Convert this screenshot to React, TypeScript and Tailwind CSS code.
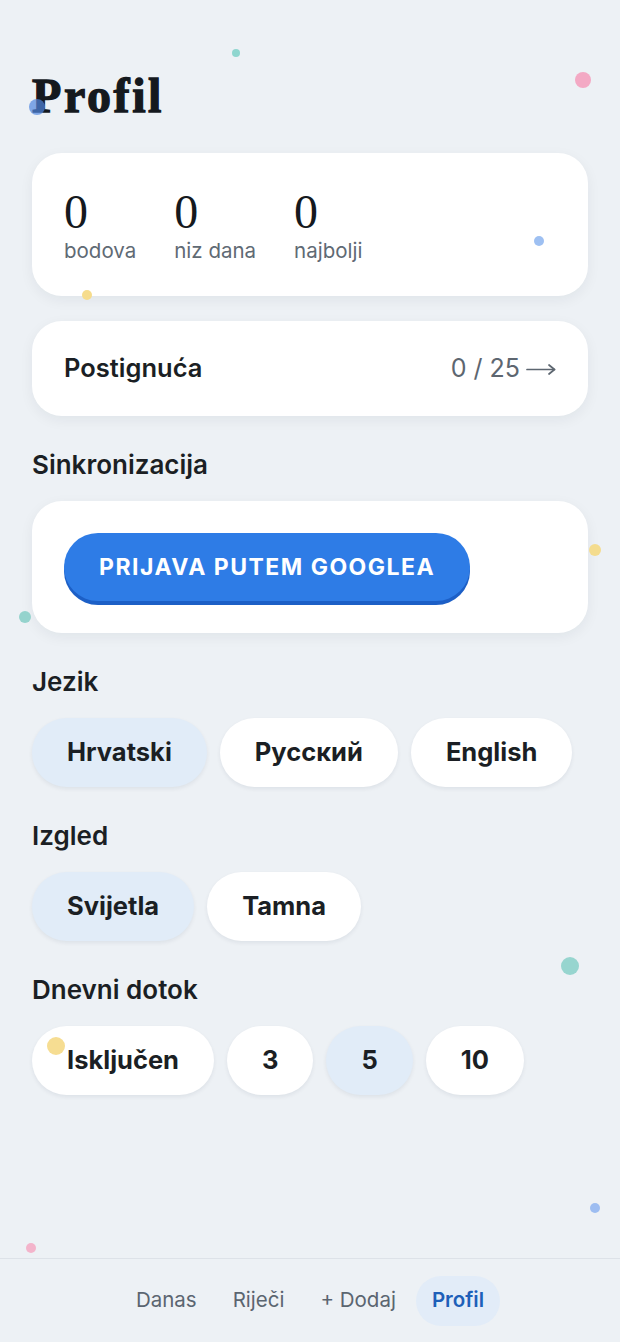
import React from 'react';

const dots = [
  { x: 236, y: 53, r: 4, c: 'bg-[#8fd6cf]' },
  { x: 583, y: 80, r: 8, c: 'bg-[#f3a9c4]' },
  { x: 37, y: 107, r: 8, c: 'bg-[#4f86e0]/70' },
  { x: 539, y: 241, r: 5, c: 'bg-[#9ec0f2]' },
  { x: 87, y: 295, r: 5, c: 'bg-[#f6dc8c]' },
  { x: 595, y: 550, r: 6, c: 'bg-[#f4dc8e]' },
  { x: 25, y: 617, r: 6, c: 'bg-[#95d3cd]' },
  { x: 570, y: 966, r: 9, c: 'bg-[#97d5cf]' },
  { x: 56, y: 1046, r: 9, c: 'bg-[#f6dd92]' },
  { x: 595, y: 1208, r: 5, c: 'bg-[#9dbdf1]' },
  { x: 31, y: 1248, r: 5, c: 'bg-[#f3b4cb]' },
];

function Chip({ label, active }: { label: string; active?: boolean }) {
  return (
    <button
      className={
        'h-[69px] px-[35px] rounded-full text-[25.5px] font-bold text-[#1b1f24] shadow-[0_2px_4px_rgba(20,30,50,0.07)] ' +
        (active ? 'bg-[#e1ecf8]' : 'bg-white')
      }
    >
      {label}
    </button>
  );
}

function Section({ title, children }: { title: string; children: React.ReactNode }) {
  return (
    <section className="mt-[34px]">
      <h2 className="h-[30px] leading-[30px] text-[26px] font-semibold text-[#1b1f24]">{title}</h2>
      <div className="mt-[21px]">{children}</div>
    </section>
  );
}

export default function App() {
  const stats = [
    { value: '0', label: 'bodova' },
    { value: '0', label: 'niz dana' },
    { value: '0', label: 'najbolji' },
  ];

  return (
    <div className="relative min-h-screen flex flex-col bg-[#edf1f5] font-['Inter','Noto_Sans',sans-serif] overflow-hidden">
      <main className="flex-1 px-8 pt-[67px]">
        <h1 className="h-[58px] leading-[58px] text-[48px] font-bold text-[#15191e] font-['Liberation_Serif','Times_New_Roman',serif] tracking-[2.6px] [-webkit-text-stroke:1.3px_#15191e]">
          Profil
        </h1>

        {/* statistika */}
        <div className="mt-[28px] bg-white rounded-[30px] shadow-[0_4px_14px_rgba(20,30,50,0.06)] px-8 pt-[35px] pb-[30px] flex gap-[38px]">
          {stats.map((s) => (
            <div key={s.label} className="flex flex-col">
              <span className="h-[48px] leading-none text-[48px] text-[#15191e] font-['Liberation_Serif','Times_New_Roman',serif]">
                {s.value}
              </span>
              <span className="h-[30px] leading-[30px] text-[20.5px] text-[#5f6a74]">{s.label}</span>
            </div>
          ))}
        </div>

        {/* postignuca */}
        <div className="mt-[25px] h-[95px] bg-white rounded-[30px] shadow-[0_4px_14px_rgba(20,30,50,0.06)] px-8 flex items-center justify-between">
          <span className="text-[25.5px] font-semibold text-[#1b1f24]">Postignuća</span>
          <span className="text-[25px] text-[#5d6670] flex items-center gap-[6px]">
            0 / 25
            <svg width="30" height="14" viewBox="0 0 30 14" fill="none" stroke="#5d6670" strokeWidth="1.7" strokeLinecap="round" strokeLinejoin="round">
              <path d="M1 7.5H28.5" />
              <path d="M23 3L28.5 7.5L23 12" />
            </svg>
          </span>
        </div>

        <Section title="Sinkronizacija">
          <div className="bg-white rounded-[30px] shadow-[0_4px_14px_rgba(20,30,50,0.06)] px-8 py-8">
            <button className="h-[68px] px-[35px] rounded-full bg-[#2e7ce6] shadow-[0_4px_0_#1c5fc6] text-white text-[23px] font-bold tracking-[0.065em]">
              PRIJAVA PUTEM GOOGLEA
            </button>
          </div>
        </Section>

        <Section title="Jezik">
          <div className="flex gap-[13px]">
            <Chip label="Hrvatski" active />
            <Chip label="Русский" />
            <Chip label="English" />
          </div>
        </Section>

        <Section title="Izgled">
          <div className="flex gap-[13px]">
            <Chip label="Svijetla" active />
            <Chip label="Tamna" />
          </div>
        </Section>

        <Section title="Dnevni dotok">
          <div className="flex gap-[13px]">
            <Chip label="Isključen" />
            <Chip label="3" />
            <Chip label="5" active />
            <Chip label="10" />
          </div>
        </Section>
      </main>

      <nav className="h-[84px] border-t border-[#dde2e8] flex items-center justify-center gap-1 text-[20.5px]">
        <a className="px-4 h-[50px] flex items-center rounded-full text-[#5b6570]">Danas</a>
        <a className="px-4 h-[50px] flex items-center rounded-full text-[#5b6570]">Riječi</a>
        <a className="px-4 h-[50px] flex items-center rounded-full text-[#5b6570]">+ Dodaj</a>
        <a className="px-4 h-[50px] flex items-center rounded-full bg-[#e2ecf8] text-[#1e5fb9] font-semibold">Profil</a>
      </nav>

      {dots.map((d, i) => (
        <span
          key={i}
          className={'absolute rounded-full pointer-events-none ' + d.c}
          style={{ left: d.x - d.r, top: d.y - d.r, width: d.r * 2, height: d.r * 2 }}
        />
      ))}
    </div>
  );
}
